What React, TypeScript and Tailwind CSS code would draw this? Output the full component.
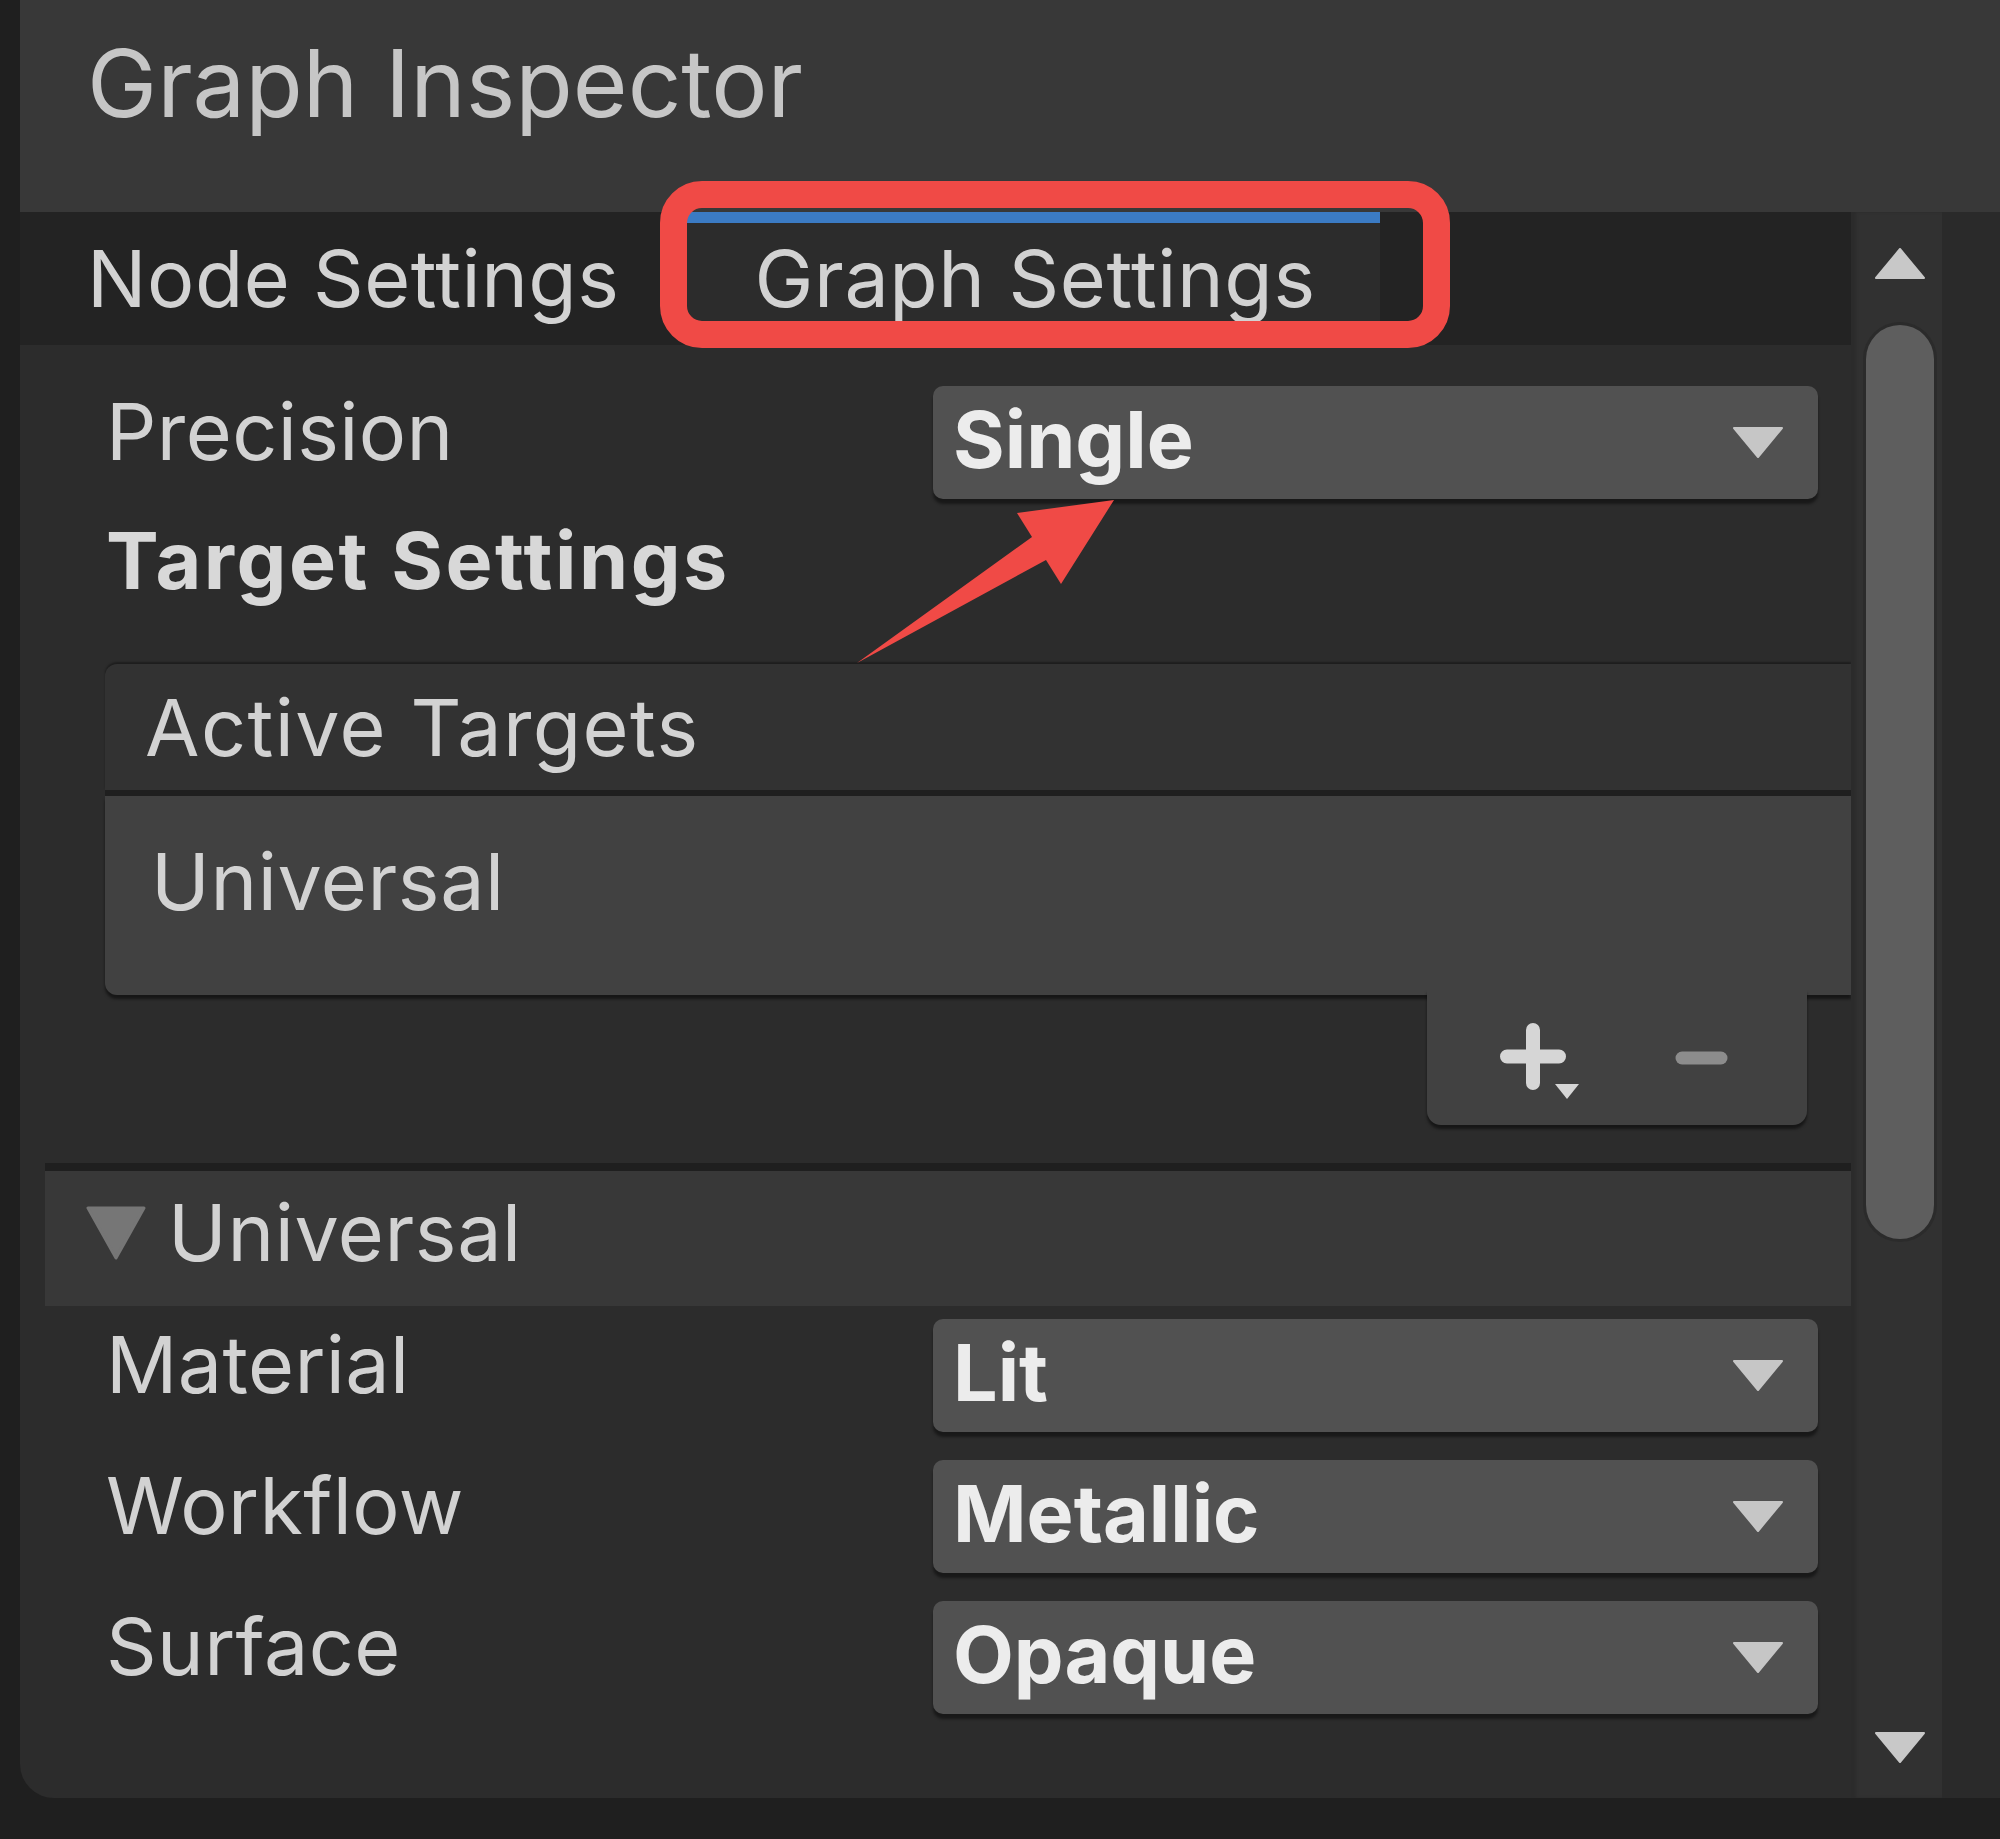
import React from "react";

const LABEL = "text-[79px] leading-none text-[#d2d2d2]";

function DownTriangle({ color = "#c6c6c6" }: { color?: string }) {
  return (
    <svg width="50" height="31" viewBox="0 0 50 31">
      <path d="M1 1 H49 L25 30 Z" fill={color} stroke={color} strokeWidth="2" strokeLinejoin="round" />
    </svg>
  );
}

function Dropdown({ value }: { value: string }) {
  return (
    <div className="flex h-[113px] w-[885px] items-center justify-between rounded-[10px] bg-[#515151] pl-[20px] pr-[35px] shadow-[0_5px_3px_rgba(0,0,0,0.45)]">
      <span className="pb-[6px] text-[79px] font-bold leading-none text-[#ececec]">{value}</span>
      <DownTriangle />
    </div>
  );
}

function FieldRow({ label, value, className = "" }: { label: string; value: string; className?: string }) {
  return (
    <div className={`flex pl-[86px] ${className}`}>
      <div className={`w-[827px] pt-[6px] tracking-[0.4px] ${LABEL}`}>{label}</div>
      <Dropdown value={value} />
    </div>
  );
}

function ActiveTargets() {
  return (
    <div className="ml-[85px] mt-[64px]">
      <div className="flex h-[126px] items-center rounded-tl-[12px] bg-[#323232] pl-[40px] shadow-[0_-2px_2px_rgba(0,0,0,0.35)]">
        <span className={`tracking-[1.4px] ${LABEL}`}>Active Targets</span>
      </div>
      <div className="h-[6px] bg-[#1f1f1f]" />
      <div className="h-[199px] rounded-bl-[12px] bg-[#414141] pl-[46px] pt-[46px] shadow-[0_4px_3px_rgba(0,0,0,0.5)]">
        <span className={`tracking-[0.6px] ${LABEL}`}>Universal</span>
      </div>
      <div className="flex justify-end pr-[44px]">
        <div className="relative z-10 -mt-[6px] flex h-[136px] w-[380px] items-start rounded-b-[14px] bg-[#414141] pl-[73px] pt-[34px] shadow-[0_4px_3px_rgba(0,0,0,0.5)]">
          <svg width="82" height="77" viewBox="0 0 82 77">
            <path d="M7 33.5 H59 M33 7 V60" stroke="#d6d6d6" strokeWidth="14" strokeLinecap="round" />
            <path d="M55 61 H79 L67 76 Z" fill="#d6d6d6" />
          </svg>
          <svg width="53" height="14" viewBox="0 0 53 14" className="ml-[93px] mt-[28px]">
            <path d="M7 7 H46" stroke="#8c8c8c" strokeWidth="13" strokeLinecap="round" />
          </svg>
        </div>
      </div>
    </div>
  );
}

function Scrollbar() {
  return (
    <div className="flex w-[91px] shrink-0 flex-col items-center bg-[#313131] pl-[6px] shadow-[inset_5px_0_3px_rgba(0,0,0,0.12)]">
      <svg width="50" height="31" viewBox="0 0 50 31" className="mt-[36px]">
        <path d="M1 30 H49 L25 1 Z" fill="#c8c8c8" stroke="#c8c8c8" strokeWidth="2" strokeLinejoin="round" />
      </svg>
      <div className="mt-[46px] h-[914px] w-[68px] rounded-full bg-[#5e5e5e] shadow-[0_0_0_3px_#2b2b2b]" />
      <div className="flex-1" />
      <div className="mb-[35px]">
        <DownTriangle color="#c8c8c8" />
      </div>
    </div>
  );
}

export default function App() {
  return (
    <div className="relative h-[1839px] w-[2000px] overflow-hidden bg-[#1f1f1f] font-['Inter','Noto_Sans',sans-serif]">
      <div className="ml-[20px] flex h-[1798px] flex-col overflow-hidden rounded-bl-[34px] bg-[#2c2c2c]">
        <div className="h-[212px] shrink-0 bg-[#383838] pl-[67px] pt-[36px]">
          <h1 className="text-[94px] font-normal leading-none text-[#c6c6c6]">Graph Inspector</h1>
        </div>

        <div className="flex min-h-0 flex-1">
          <div className="flex w-[1831px] shrink-0 flex-col overflow-hidden">
            <div className="flex h-[133px] shrink-0 bg-[#232323]">
              <div className={`flex items-center px-[67px] tracking-[0.5px] ${LABEL}`}>Node Settings</div>
              <div className={`flex items-center bg-[#2c2c2c] pl-[68px] pr-[64px] tracking-[0.6px] shadow-[inset_0_11px_0_#3b7bc4] ${LABEL}`}>
                Graph Settings
              </div>
            </div>

            <div className="flex-1 pt-[41px]">
              <FieldRow label="Precision" value="Single" />
              <div className="mt-[22px] pl-[86px] text-[79px] font-bold leading-none tracking-[2.5px] text-[#d8d8d8]">
                Target Settings
              </div>

              <ActiveTargets />

              <div className="ml-[25px] mt-[38px] h-[8px] bg-[#1f1f1f]" />
              <div className="ml-[25px] flex h-[135px] items-center bg-[#383838] pb-[12px] pl-[41px]">
                <svg width="60" height="54" viewBox="0 0 60 54">
                  <path d="M2 2 H58 L30 52 Z" fill="#767676" stroke="#767676" strokeWidth="3" strokeLinejoin="round" />
                </svg>
                <span className={`ml-[22px] tracking-[0.6px] ${LABEL}`}>Universal</span>
              </div>

              <FieldRow label="Material" value="Lit" className="mt-[13px]" />
              <FieldRow label="Workflow" value="Metallic" className="mt-[28px]" />
              <FieldRow label="Surface" value="Opaque" className="mt-[28px]" />
            </div>
          </div>

          <Scrollbar />
          <div className="flex-1 bg-[#2a2a2a]" />
        </div>
      </div>

      {/* annotation: box round the Graph Settings tab */}
      <div className="pointer-events-none absolute left-[660px] top-[181px] h-[167px] w-[790px] rounded-[42px] border-[27px] border-[#f04a46]" />
      {/* annotation: arrow to the precision dropdown */}
      <svg className="pointer-events-none absolute left-0 top-0" width="2000" height="1839" viewBox="0 0 2000 1839">
        <polygon points="857,663 1032,537 1017,513 1114,500 1061,584 1046,560" fill="#f04a46" />
      </svg>
    </div>
  );
}
